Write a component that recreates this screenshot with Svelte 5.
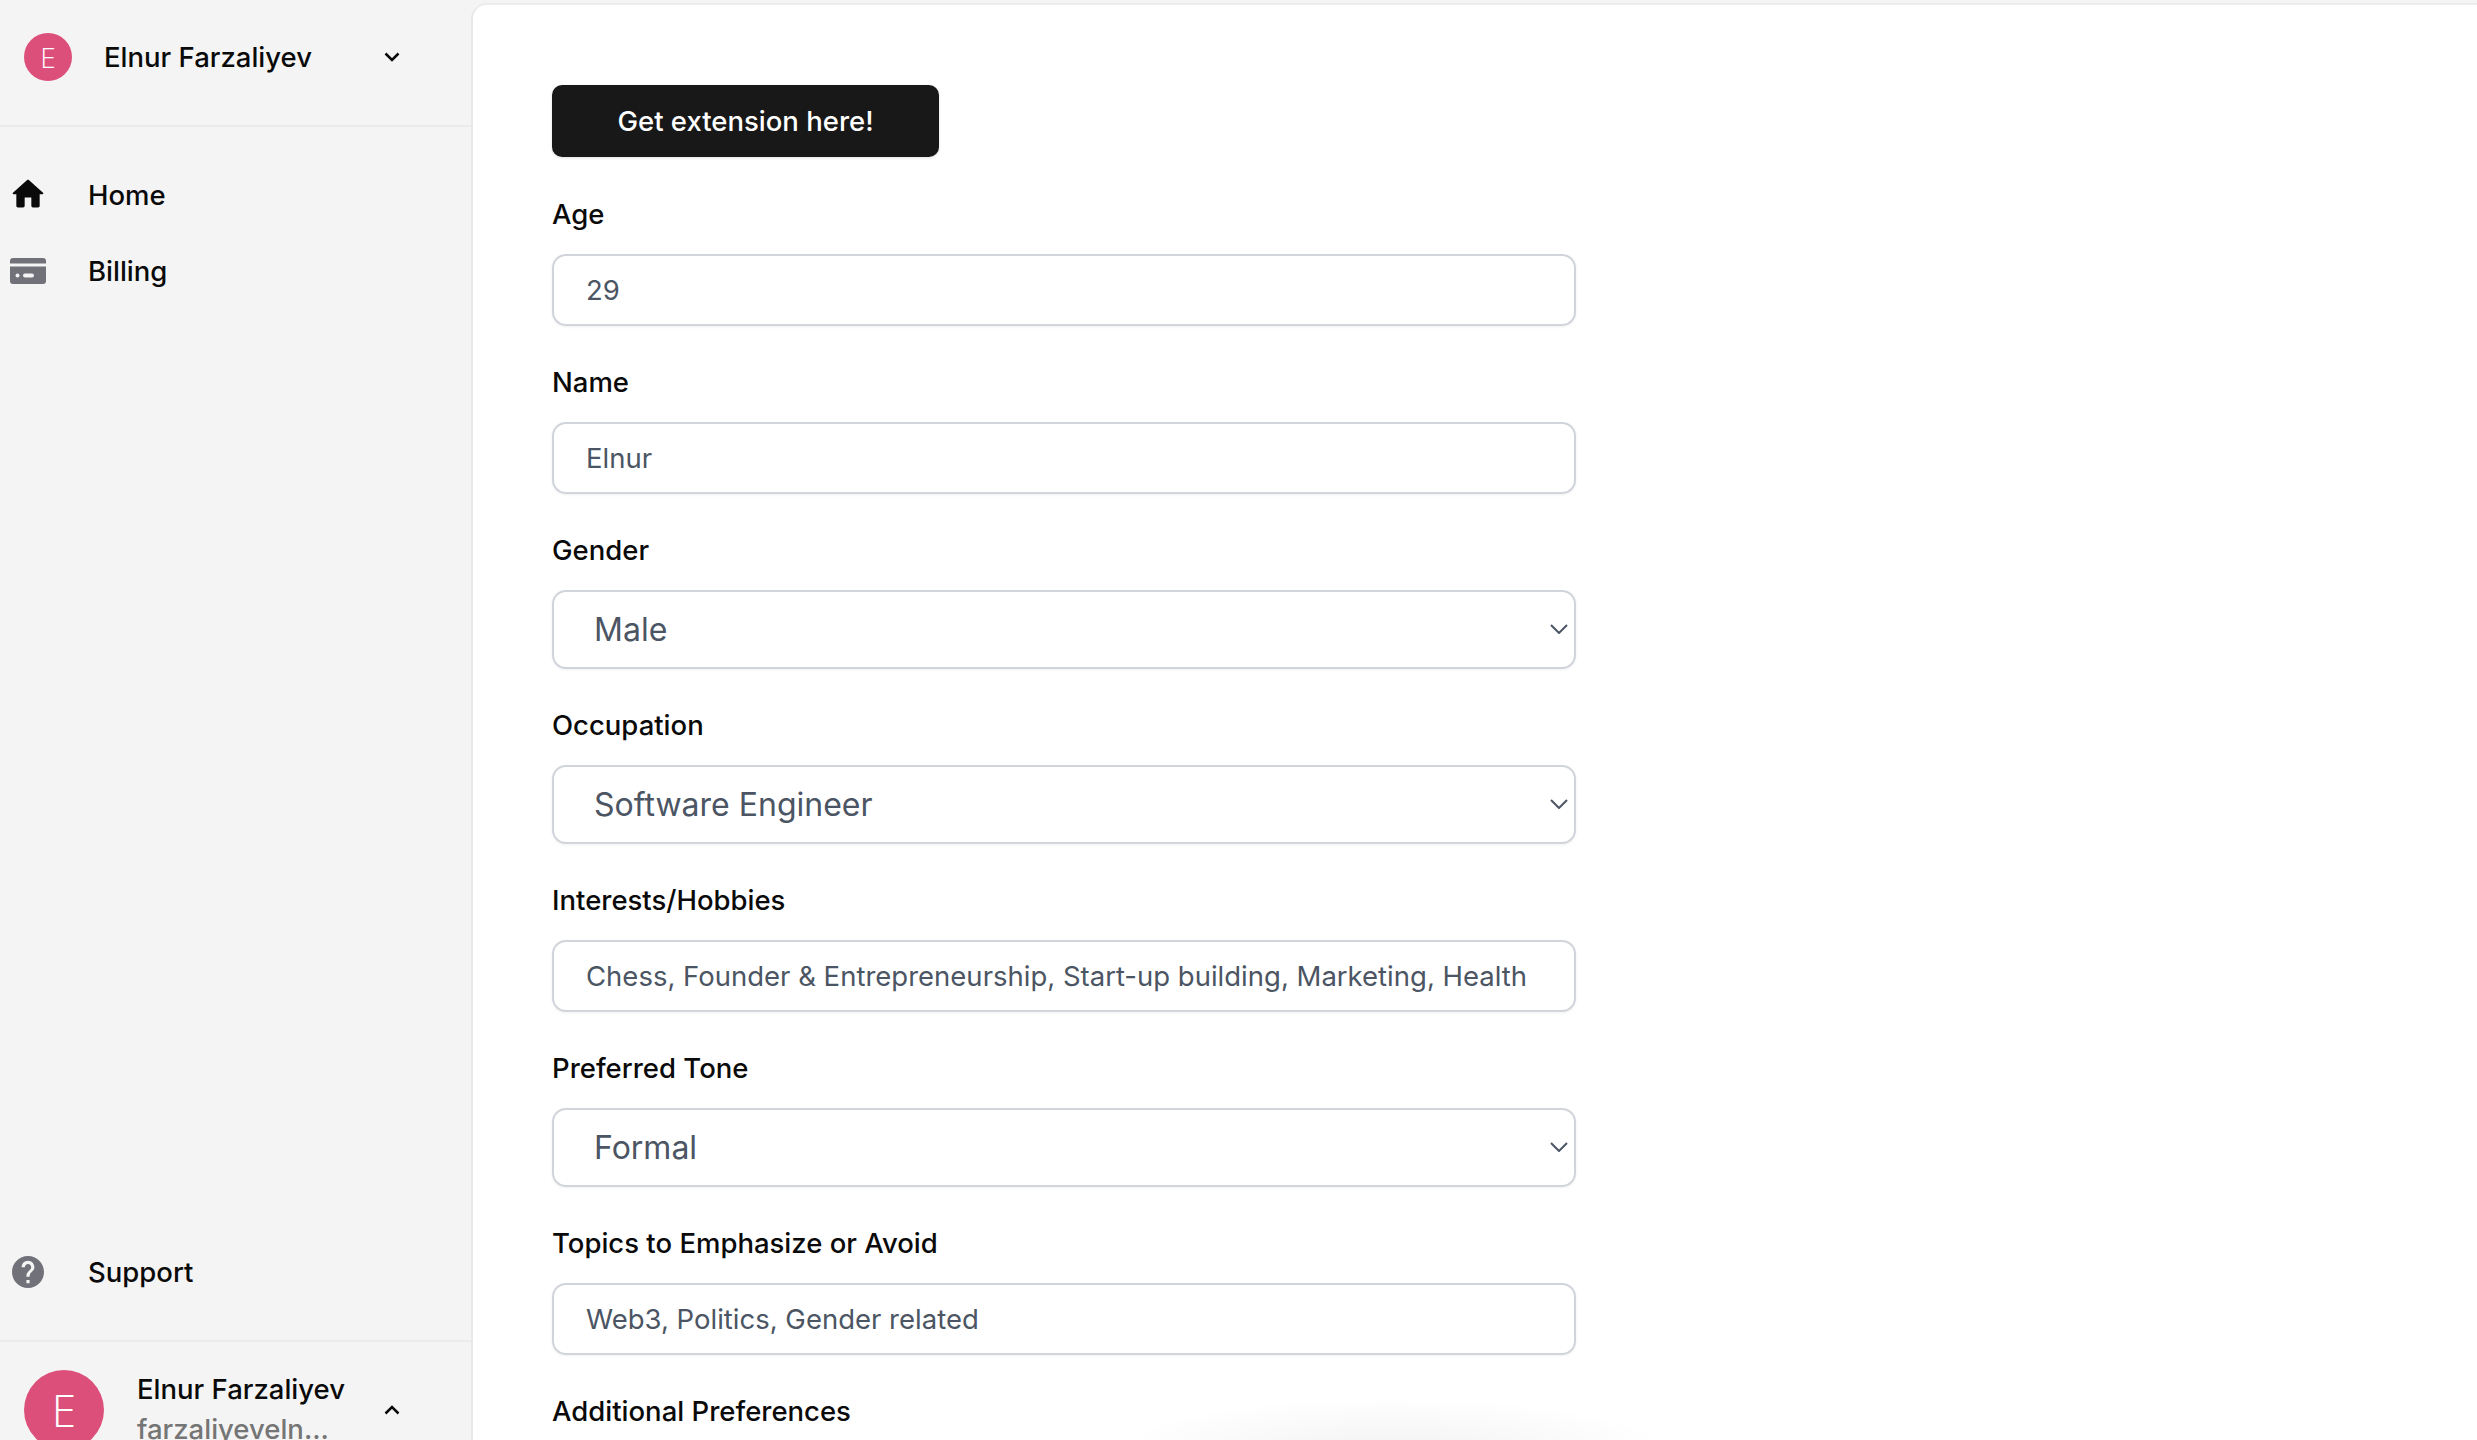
<script lang="ts">
	const fields = [
		{ label: "Age", type: "input", value: "29" },
		{ label: "Name", type: "input", value: "Elnur" },
		{ label: "Gender", type: "select", value: "Male" },
		{ label: "Occupation", type: "select", value: "Software Engineer" },
		{ label: "Interests/Hobbies", type: "input", value: "Chess, Founder & Entrepreneurship, Start-up building, Marketing, Health" },
		{ label: "Preferred Tone", type: "select", value: "Formal" },
		{ label: "Topics to Emphasize or Avoid", type: "input", value: "Web3, Politics, Gender related" },
		{ label: "Additional Preferences", type: "input", value: "" },
	]
</script>

<div class="layout">
	<aside>
		<header>
			<span class="avatar small">E</span>
			<span class="account-name">Elnur Farzaliyev</span>
			<svg class="chev" viewBox="0 0 16 10" aria-hidden="true"><path d="M1.5 1.5 8 8l6.500-6.500" /></svg>
		</header>

		<nav>
			<a href="#home">
				<svg class="icon home" viewBox="2.4 2.9 19.200 19.200" aria-hidden="true">
					<path d="M10 19v-5h4v5c0 .55.45 1 1 1h3c.55 0 1-.45 1-1v-7h1.700c.46 0 .68-.57.33-.87L12.670 3.600c-.38-.34-.96-.34-1.340 0l-8.360 7.530c-.34.3-.13.87.33.87H5v7c0 .55.45 1 1 1h3c.55 0 1-.45 1-1z" />
				</svg>
				Home
			</a>
			<a href="#billing">
				<svg class="icon card" viewBox="0 0 36 26" aria-hidden="true">
					<path d="M3 0h30a3 3 0 0 1 3 3v2.500H0V3a3 3 0 0 1 3-3z" />
					<path fill-rule="evenodd" d="M0 8.500h36V23a3 3 0 0 1-3 3H3a3 3 0 0 1-3-3zM7.500 15.500a2 2 0 1 0 0 4 2 2 0 0 0 0-4zM15 15.500a2 2 0 1 0 0 4h7a2 2 0 1 0 0-4z" />
				</svg>
				Billing
			</a>
		</nav>

		<a class="support" href="#support">
			<svg class="icon help" viewBox="2 2 20 20" aria-hidden="true">
				<path d="M12 2C6.480 2 2 6.480 2 12s4.480 10 10 10 10-4.480 10-10S17.520 2 12 2zm1 17h-2v-2h2v2zm2.070-7.750l-.9.92C13.450 12.900 13 13.500 13 15h-2v-.5c0-1.100.45-2.100 1.170-2.830l1.240-1.260c.37-.36.59-.86.59-1.410 0-1.100-.9-2-2-2s-2 .9-2 2H8c0-2.210 1.790-4 4-4s4 1.790 4 4c0 .88-.36 1.680-.93 2.250z" />
			</svg>
			Support
		</a>

		<footer>
			<span class="avatar large">E</span>
			<div class="who">
				<span class="account-name">Elnur Farzaliyev</span>
				<span class="email">farzaliyeveln...</span>
			</div>
			<svg class="chev" viewBox="0 0 16 10" aria-hidden="true"><path d="M1.500 8.500 8 2l6.500 6.500" /></svg>
		</footer>
	</aside>

	<main>
		<button class="cta">Get extension here!</button>

		<form>
			{#each fields as field}
				<label class="field">
					<span class="label">{field.label}</span>
					{#if field.type === "select"}
						<span class="select-wrap">
							<select>
								<option>{field.value}</option>
							</select>
							<svg viewBox="0 0 18 10" aria-hidden="true"><path d="M1 1l8 8 8-8" /></svg>
						</span>
					{:else}
						<input type="text" value={field.value} />
					{/if}
				</label>
			{/each}
		</form>

		<div class="glow"></div>
	</main>
</div>

<style>
	:global(body) {
		margin: 0;
		background: #f4f4f4;
		overflow: hidden;
	}

	.layout {
		display: flex;
		height: 1440px;
		overflow: hidden;
		font-family: Inter, "Liberation Sans", sans-serif;
		color: #0a0a0a;
	}

	aside {
		display: flex;
		flex-direction: column;
		flex: 0 0 471px;
		height: 1440px;
		overflow: hidden;
		background: #f4f4f4;
	}

	header {
		display: flex;
		align-items: center;
		flex: 0 0 127px;
		padding: 0 71px 11px 24px;
		border-bottom: 2px solid #ebebeb;
		box-sizing: border-box;
	}

	.avatar {
		display: flex;
		align-items: center;
		justify-content: center;
		flex: none;
		border-radius: 50%;
		background: #dc4f7b;
		color: #fff;
		font-family: "Open Sans", sans-serif;
		font-weight: 300;
	}

	.avatar.small {
		width: 48px;
		height: 48px;
		font-size: 28px;
		margin-right: 32px;
	}

	.avatar.large {
		width: 80px;
		height: 80px;
		font-size: 44px;
		margin-right: 33px;
	}

	.account-name {
		font-size: 27.500px;
		font-weight: 500;
		white-space: nowrap;
		line-height: 36px;
	}

	.chev {
		flex: none;
		width: 16px;
		height: 10px;
		margin-left: auto;
	}

	.chev path {
		fill: none;
		stroke: #0a0a0a;
		stroke-width: 2.500;
	}

	nav {
		display: flex;
		flex-direction: column;
		gap: 28px;
		padding-top: 44px;
		flex: 1;
	}

	nav a,
	.support {
		display: flex;
		align-items: center;
		height: 48px;
		padding-left: 10px;
		font-size: 27.500px;
		font-weight: 500;
		color: #0a0a0a;
		text-decoration: none;
	}

	.icon {
		flex: none;
		width: 36px;
		height: 32px;
		margin-right: 42px;
		fill: #71717a;
	}

	.icon.home {
		fill: #0a0a0a;
	}

	.icon.card {
		height: 26px;
	}

	.icon.help {
		width: 32px;
		margin: 0 44px 0 2px;
	}

	.support {
		margin-bottom: 44px;
	}

	footer {
		display: flex;
		align-items: flex-start;
		box-sizing: border-box;
		flex: none;
		height: 100px;
		padding: 28px 71px 0 24px;
		border-top: 2px solid #ebebeb;
	}

	.who {
		display: flex;
		flex-direction: column;
		gap: 4px;
		padding-top: 1px;
	}

	.email {
		font-size: 27.500px;
		font-weight: 500;
		line-height: 36px;
		color: #757575;
	}

	footer .chev {
		margin-top: 35px;
	}

	main {
		position: relative;
		flex: 1;
		box-sizing: border-box;
		height: 1440px;
		margin-top: 3px;
		padding: 80px 0 0 79px;
		overflow: hidden;
		background: #fff;
		border-left: 2px solid #e8e8e8;
		border-top: 2px solid #ececec;
		border-top-left-radius: 16px;
	}

	.cta {
		display: block;
		width: 387px;
		height: 72px;
		border: none;
		border-radius: 10px;
		background: #181818;
		color: #fff;
		font-family: inherit;
		font-size: 27.500px;
		font-weight: 500;
		box-shadow: 0 1px 3px rgba(0, 0, 0, 0.12);
	}

	form {
		display: flex;
		flex-direction: column;
		width: 1024px;
		margin-top: 1px;
	}

	.field {
		display: flex;
		flex-direction: column;
	}

	.label {
		margin: 40px 0 24px;
		font-size: 27.500px;
		font-weight: 500;
		line-height: 32px;
		color: #0a0a0a;
	}

	input,
	select {
		box-sizing: border-box;
		width: 100%;
		border: 2px solid #d1d5db;
		border-radius: 14px;
		background: #fff;
		color: #4b5563;
		font-family: inherit;
		outline: none;
		box-shadow: 0 1px 3px rgba(0, 0, 0, 0.06);
	}

	input {
		height: 72px;
		padding: 0 32px;
		font-size: 27.500px;
	}

	.select-wrap {
		position: relative;
		display: block;
		height: 79px;
	}

	select {
		display: block;
		height: 79px;
		padding: 0 40px;
		font-size: 32px;
		appearance: none;
	}

	.select-wrap svg {
		position: absolute;
		top: 34px;
		right: 8px;
		width: 18px;
		height: 10px;
		pointer-events: none;
	}

	.select-wrap path {
		fill: none;
		stroke: #4b5563;
		stroke-width: 2;
	}

	.glow {
		position: absolute;
		left: 640px;
		top: 1392px;
		width: 560px;
		height: 110px;
		border-radius: 50%;
		background: radial-gradient(closest-side, rgba(0, 0, 0, 0.05), rgba(0, 0, 0, 0));
		pointer-events: none;
	}
</style>
